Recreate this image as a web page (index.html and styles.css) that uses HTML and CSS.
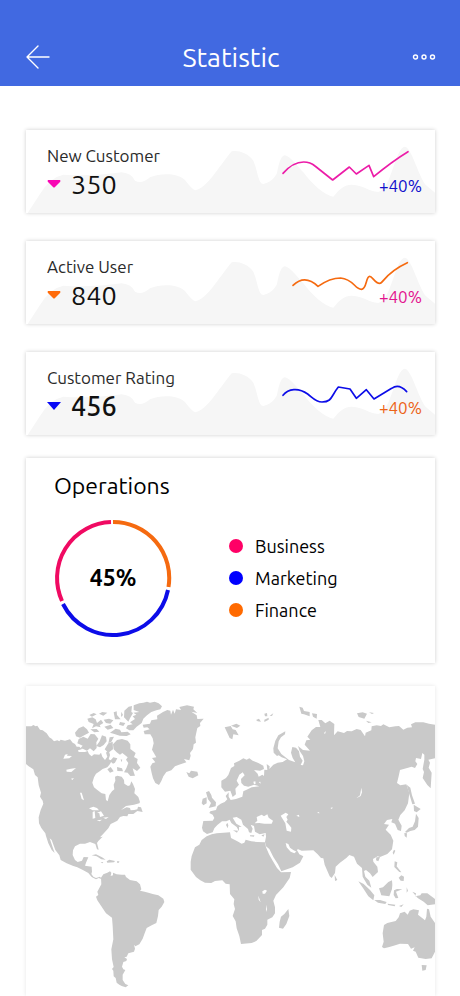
FILE: index.html
```html
<!DOCTYPE html>
<html lang="en">
<head>
<meta charset="utf-8">
<meta name="viewport" content="width=device-width, initial-scale=1">
<title>Statistic</title>
<link rel="stylesheet" href="styles.css">
</head>
<body>
<svg class="defs" aria-hidden="true">
  <symbol id="hills" viewBox="33 28 1227 249" preserveAspectRatio="none">
    <path d="M38 277L75 220Q105 170 145 162C190 166 260 164 320 155Q350 158 360 180Q380 192 405 170C440 155 490 158 510 178Q530 205 540 209C575 205 610 140 650 92C670 88 700 98 715 120C728 150 730 190 745 190C765 185 775 175 785 160C790 140 795 104 810 104C830 110 850 140 865 155C890 190 930 225 955 228C970 210 985 192 1010 192C1050 195 1060 212 1090 214C1130 205 1140 80 1170 78C1190 80 1215 180 1235 195L1260 216V277Z"/>
  </symbol>
</svg>
<header class="topbar">
  <button class="icon-btn" type="button" aria-label="Back">
    <svg width="24" height="24" viewBox="0 0 24 24"><path d="M23 12H1M12 1L1 12L12 23"/></svg>
  </button>
  <h1>Statistic</h1>
  <button class="icon-btn" type="button" aria-label="More">
    <svg width="24" height="24" viewBox="0 0 24 24"><circle cx="3.500" cy="12" r="2"/><circle cx="12" cy="12" r="2"/><circle cx="20.500" cy="12" r="2"/></svg>
  </button>
</header>
<main>
  <div class="stats">
    <section class="card stat">
      <svg class="hills"><use href="#hills"/></svg>
      <div>
        <h2>New Customer</h2>
        <p class="value"><svg class="pink" width="14" height="8" viewBox="0 0 14 8"><path d="M1 0H13Q14 1 13 2L8 7Q7 8 6 7L1 2Q0 1 1 0Z"/></svg>350</p>
      </div>
      <div class="trend">
        <svg class="pink-line" viewBox="165 66 426 108"><path d="M174 160Q204 126 236 126Q256 126 270 138L323 180L373 141L394 162L432 136L446 170Q500 125 549 95"/></svg>
        <span class="blue-text">+40%</span>
      </div>
    </section>
    <section class="card stat">
      <svg class="hills"><use href="#hills"/></svg>
      <div>
        <h2>Active User</h2>
        <p class="value"><svg class="orange" width="14" height="8" viewBox="0 0 14 8"><path d="M1 0H13Q14 1 13 2L8 7Q7 8 6 7L1 2Q0 1 1 0Z"/></svg>840</p>
      </div>
      <div class="trend">
        <svg class="orange-line" viewBox="165 69 426 108"><path d="M204 166Q240 132 279 169Q315 144 347 144C385 147 390 178 409 178C426 178 422 139 434 139C442 139 450 160 464 160C476 160 478 130 547 98"/></svg>
        <span class="pink-text">+40%</span>
      </div>
    </section>
    <section class="card stat">
      <svg class="hills"><use href="#hills"/></svg>
      <div>
        <h2>Customer Rating</h2>
        <p class="value strong"><svg class="blue" width="14" height="8" viewBox="0 0 14 8"><path d="M0 0H14L7 8Z"/></svg>456</p>
      </div>
      <div class="trend">
        <svg class="blue-line" viewBox="165 72 426 108"><path d="M174 166C190 146 220 142 248 162C264 174 272 186 291 186C322 186 318 168 340 141L375 147L394 175L424 149L447 177L500 145Q522 130 545 155"/></svg>
        <span class="orange-text">+40%</span>
      </div>
    </section>
  </div>

  <section class="card operations">
    <h2>Operations</h2>
    <div class="ops-body">
      <div class="donut">
        <svg viewBox="0 0 118 118" aria-hidden="true">
          <path class="orange-line" d="M59 3A56 56 0 0 1 114.500 68"/>
          <path class="blue-line" d="M114 71A56 56 0 0 1 9 85"/>
          <path class="rose-line" d="M8 82A56 56 0 0 1 57 3"/>
        </svg>
        <strong>45%</strong>
      </div>
      <ul class="legend">
        <li><i class="dot rose-dot"></i>Business</li>
        <li><i class="dot blue-dot"></i>Marketing</li>
        <li><i class="dot orange-dot"></i>Finance</li>
      </ul>
    </div>
  </section>

  <section class="card map">
    <svg viewBox="18 18 1227 930" role="img" aria-label="World map">
      <g>
        <!-- North America -->
        <path d="M18 139L34 139L40 135L47 139L52 137L60 149L68 151L80 160L88 172L95 176L102 184L112 181L118 184L122 179L135 182L150 178L158 188L165 192L170 200L178 200L185 208L174 211L176 216L195 216L203 213L207 222L215 229L222 223L238 224L243 218L247 230L255 240L262 230L258 218L266 210L270 225L266 238L275 242L270 252L262 262L248 267L240 273L228 281L222 292L217 308L222 322L232 330L245 340L256 342L258 360L263 364L268 345L276 334L283 328L281 314L286 302L285 290L292 287L305 290L312 300L313 311L324 318L330 316L334 304L339 312L345 327L343 340L355 351L360 366L358 370L342 374L318 378L303 390L320 382L330 384L332 391L343 390L352 388L354 380L363 382L368 396L352 393L340 402L325 402L322 409L310 408L300 411L292 422L280 428L272 432L265 445L250 461L240 472L248 470L235 483L231 489L236 509L231 508L226 492L210 486L195 491L180 491L165 499L159 511L158 525L165 540L173 546L186 542L191 531L205 532L198 548L195 557L215 560L216 575L214 582L220 590L228 594L240 590L246 598L236 594L228 598L215 591L205 579L190 571L172 562L160 558L140 550L122 540L118 526L106 510L95 480L89 475L97 499L104 519L95 510L85 490L78 468L76 460L64 444L57 430L56 412L62 390L70 371L68 362L60 350L63 338L56 315L53 292L45 285L40 268L25 258L18 252Z"/>
        <!-- Arctic islands -->
        <path d="M165 158L176 145L190 139L201 148L207 158L190 167L180 173L168 169ZM176 177L190 170L203 176L212 162L224 163L235 176L229 187L230 204L221 214L210 205L201 212L188 206L179 207L188 197L172 190ZM202 116L217 112L227 118L231 129L243 119L250 129L239 136L242 142L228 139L216 145L221 132L206 126ZM208 105L221 99L230 103L216 110ZM237 101L247 96L262 98L250 107ZM281 97L290 94L291 105L302 118L285 118ZM251 119L267 116L280 121L271 131L258 129ZM304 95L309 105L303 111ZM313 92L326 80L336 78L334 96L339 99L330 115L325 125L312 112ZM341 76L358 70L370 68L381 65L390 68L404 65L416 70L426 79L421 88L409 91L394 96L381 106L370 116L365 129L350 140L340 151L328 151L318 145L323 136L338 133L330 127L345 117L338 109L349 104L340 98L358 96L341 90ZM300 126L316 129L310 138L297 134ZM253 140L272 134L280 144L263 149ZM270 158L287 146L300 149L304 157L323 155L332 163L320 168L299 167L283 162ZM246 166L258 170L260 184L251 195L240 202L229 198L239 184ZM269 172L282 170L274 185L265 190ZM211 148L230 147L238 155L223 157Z"/>
        <path d="M291 180L306 177L323 182L331 193L331 207L347 219L342 231L353 237L351 249L361 263L351 273L338 265L341 276L345 287L331 288L323 278L312 277L319 265L325 249L318 239L323 232L307 219L300 224L290 217L281 208L279 193ZM270 243L280 232L292 235L285 248L279 251ZM262 268L272 261L281 274L270 278ZM265 190L278 185L279 208L265 218L254 208ZM291 261L306 265L309 274L292 273ZM302 238L307 239L304 247Z"/>
        <!-- Greenland -->
        <path d="M368 134L390 131L394 121L412 118L411 107L429 96L442 90L451 92L453 104L459 89L464 101L468 88L483 90L478 81L501 76L522 80L520 88L532 99L514 95L530 106L532 117L551 116L540 129L541 138L532 144L526 172L528 188L521 193L519 207L510 219L512 227L508 241L492 237L499 247L477 254L465 259L454 271L439 276L430 289L424 303L417 315L406 309L399 295L395 279L391 260L397 250L406 247L396 234L409 232L402 220L396 209L401 190L398 175L391 163L374 163L371 153L389 148L382 142L371 143Z"/>
        <path d="M499 276L508 280L513 272L532 275L535 286L518 295L506 290Z"/>
        <!-- Caribbean -->
        <path d="M215 526L228 523L246 532L257 539L244 538L230 529ZM260 544L268 539L285 543L282 547L262 548ZM242 546L250 546L247 550ZM291 544L298 544L297 548L291 548Z"/>
      </g>
      <!-- South America -->
      <path d="M243 593L250 583L262 578L270 574L274 578L272 588L279 586L279 578L290 583L305 584L315 584L318 591L330 600L350 604L360 613L364 628L360 632L374 635L388 639L398 642L415 646L430 656L433 666L425 680L416 690L414 708L409 729L395 736L380 744L374 760L368 776L358 793L346 799L342 794L345 806L342 815L325 820L320 830L313 832L321 837L319 843L310 846L306 860L310 868L316 870L308 884L308 900L316 912L325 916L317 922L305 918L298 914L290 908L287 894L281 889L280 872L276 867L281 861L276 838L274 808L280 778L278 738L276 713L258 700L245 680L232 661L228 650L235 645L232 635L244 613Z"/>
      <g transform="translate(480 0)">
        <!-- Eurasia -->
        <path d="M70 423L98 422L103 414L98 404L88 399L91 394L108 390L112 379L122 371L134 366L142 358L137 348L146 337L146 350L152 360L168 357L187 350L190 334L203 328L215 322L238 319L222 314L205 320L192 317L184 309L183 297L194 286L188 277L178 284L170 302L177 314L166 326L168 343L158 351L151 332L135 335L124 322L124 302L138 294L145 285L153 264L163 258L162 250L178 242L190 235L200 239L208 235L218 242L235 249L250 257L252 267L240 272L222 270L233 281L236 290L247 284L252 288L253 269L262 270L260 252L269 259L268 267L280 254L293 248L308 246L321 238L305 232L296 226L291 228L281 218L280 205L286 182L295 166L316 154L315 163L303 172L296 184L293 205L304 222L327 240L346 247L338 234L333 218L337 201L348 203L357 214L360 230L368 242L362 255L369 256L373 244L369 228L359 213L354 198L369 210L390 212L374 194L379 181L391 179L382 170L395 151L408 141L421 141L415 120L425 120L436 130L449 122L463 132L462 166L473 154L492 159L501 153L515 154L530 147L542 150L555 169L557 158L574 151L575 139L590 136L603 138L610 133L628 142L646 139L657 138L670 149L682 143L696 142L693 133L706 127L730 127L747 131L765 134L765 235L745 239L750 248L746 263L755 278L752 325L742 315L728 294L732 276L728 267L733 239L733 224L727 219L723 237L708 234L706 244L712 252L705 264L695 260L660 270L656 289L651 309L661 316L679 313L688 340L684 370L674 391L661 405L655 419L665 437L663 453L653 450L645 431L634 427L637 417L621 420L612 432L627 434L617 449L632 464L640 482L636 508L622 522L600 531L593 529L579 537L580 545L592 560L594 576L578 591L570 580L558 570L552 573L556 590L568 602L574 623L562 614L548 590L546 564L531 551L522 530L508 525L499 534L480 548L467 560L465 579L455 594L449 589L434 554L430 535L423 534L413 523L400 511L365 512L353 507L350 515L341 511L330 503L325 492L317 489L320 502L332 515L343 520L352 512L358 523L370 529L360 548L338 562L304 574L294 553L280 531L268 507L258 499L255 486L258 470L257 459L239 463L225 455L222 438L212 434L218 446L214 459L207 457L204 447L189 434L184 419L170 411L158 413L169 431L185 440L177 441L177 454L170 441L154 429L149 419L139 424L126 424L112 435L103 445L98 457L81 462L69 454L66 443Z"/>
        <path d="M80 469L95 463L110 460L150 457L153 474L172 484L185 491L193 488L197 479L214 484L232 486L255 487L258 502L267 523L278 542L291 564L303 577L333 576L329 594L310 622L288 645L280 662L285 682L285 700L277 712L262 719L262 734L255 746L246 750L246 765L229 783L215 789L183 792L178 768L170 745L167 724L158 708L165 687L161 672L163 658L150 642L149 613L137 611L127 601L105 603L94 609L75 608L61 601L48 591L32 569L32 545L35 528L45 502L58 494L65 480Z"/>
        <!-- Islands around Europe and Africa -->
        <path d="M78 337L87 333L94 345L96 353L108 367L107 379L86 384L93 369L84 358ZM65 370L68 356L80 352L80 370L70 376ZM142 428L145 436L143 445L138 435ZM159 451L174 452L171 458ZM210 466L223 466L222 470L210 469ZM244 466L254 463L250 470ZM325 687L328 708L319 732L309 746L297 743L299 725L303 710L313 702ZM464 585L472 600L465 603Z"/>
        <!-- Arctic Ocean islands -->
        <path d="M134 142L152 138L158 148L167 150L176 166L160 163L157 178L149 174L141 157ZM153 137L169 131L181 137L171 144ZM228 120L237 116L243 125L233 124ZM253 101L261 99L262 109L255 109ZM253 119L266 113L266 119L253 126ZM269 107L280 100L276 108ZM358 80L368 83L372 93L389 96L389 109L372 103L364 101ZM396 100L411 102L410 116L399 110ZM531 100L548 97L561 101L553 116L536 111ZM567 97L582 99L576 102ZM558 122L575 127L565 129Z"/>
        <!-- Japan and South-East Asia -->
        <path d="M680 314L691 323L696 346L705 371L697 373L688 343ZM701 374L722 387L710 397L702 393ZM708 401L716 414L714 440L704 450L691 453L680 458L675 456L687 444L698 440L705 424ZM673 459L681 460L680 473L674 468ZM642 509L646 512L641 524L638 518ZM589 532L600 531L595 544L588 541ZM644 544L652 547L650 559L664 577L658 576L643 561ZM664 586L672 590L671 603L662 602L656 593ZM535 604L551 612L570 630L583 646L580 661L565 649L549 624ZM583 660L600 660L620 666L616 672L594 668ZM597 625L609 622L625 606L636 601L637 614L636 627L628 649L604 646ZM642 631L651 627L667 628L648 635L655 654L647 655L641 645ZM680 622L684 632L680 638ZM697 635L708 640L706 649L721 646L725 640L742 640L765 657L765 673L743 676L731 665L713 654ZM623 671L646 674L644 679L624 675ZM657 678L671 673L664 681Z"/>
        <!-- Australia and Tasmania -->
        <path d="M612 735L622 729L647 723L656 712L660 700L674 695L683 704L689 692L700 688L717 691L714 704L735 721L739 710L741 686L747 688L752 710L765 729L765 815L755 835L737 837L715 833L707 815L699 812L704 802L693 806L684 792L660 791L641 797L628 801L612 805L606 801L611 785L608 760ZM725 855L740 856L737 870L727 872Z"/>
      </g>
      <!-- Lakes and inland seas -->
      <g class="water">
        <path d="M135 224L143 222L141 227L156 228L148 235L130 236ZM139 269L153 266L168 264L154 276L140 275ZM153 296L162 294L157 300ZM180 338L185 338L192 361L185 357ZM207 385L220 380L231 384L237 391L218 391ZM218 396L224 393L226 414L218 416ZM231 398L243 394L252 407L240 411L238 400ZM230 421L246 419L239 424ZM249 413L266 411L258 417Z"/>
        <path d="M704 430L712 422L710 411L725 404L732 409L742 403L746 413L759 422L755 431L733 431L718 429ZM782 407L797 398L805 403L799 411L803 419L799 425L807 434L814 443L813 455L800 452L796 430ZM829 407L837 404L838 411ZM1009 355L1020 346L1024 323L1026 337L1022 348ZM931 384L938 382L936 387ZM891 399L896 396L899 400ZM912 159L918 153L915 162ZM727 634L735 629L741 632L735 641L728 641ZM715 647L719 658L722 667L716 659ZM738 674L741 688L738 696ZM700 305L706 304L707 311L702 313ZM716 306L721 305L722 311Z"/>
      </g>
    </svg>
  </section>
</main>
</body>
</html>
```
FILE: styles.css
```css
* { box-sizing: border-box; }

body {
  margin: 0;
  background: #fff;
  color: #111;
  font-family: Ubuntu, "Noto Sans", "Open Sans", sans-serif;
  font-size: 17px;
}

h1, h2, p, ul { margin: 0; padding: 0; font-weight: 400; }

svg { display: block; }

.defs { position: absolute; width: 0; height: 0; }

.topbar {
  display: flex;
  align-items: center;
  justify-content: space-between;
  padding: 28px 22px 0 24px;
  height: 86px;
  background: #4169e1;
  color: #fff;
}

.topbar h1 { font-size: 27px; line-height: 36px; }

.icon-btn {
  padding: 2px;
  border: 0;
  background: none;
  color: inherit;
  cursor: pointer;
}

.icon-btn svg {
  fill: none;
  stroke: #fff;
  stroke-width: 1.4;
  stroke-linecap: round;
  stroke-linejoin: round;
}

main {
  display: flex;
  flex-direction: column;
  gap: 23px;
  padding: 44px 25px 0 26px;
}

.stats { display: grid; gap: 28px; }

.card {
  background: #fff;
  box-shadow: 0 0 4px rgba(0, 0, 0, 0.2);
}

.stat {
  position: relative;
  display: flex;
  justify-content: space-between;
  padding: 16px 13px 13px 21px;
}

.stat > div { position: relative; }

.hills {
  position: absolute;
  inset: 0;
  width: 100%;
  height: 100%;
  fill: #f6f6f6;
}

.stat h2 { font-size: 17px; line-height: 20px; color: #2a2a2a; }

.value {
  display: flex;
  align-items: center;
  gap: 10px;
  padding-top: 2px;
  font-size: 27px;
  line-height: 32px;
}

.strong { font-weight: 500; }

.trend {
  width: 142px;
  margin-top: -4px;
  text-align: right;
  line-height: 16px;
}

.trend svg { width: 100%; height: 36px; overflow: visible; }

.trend span { display: block; }

.trend path {
  fill: none;
  stroke-width: 5;
  stroke-linecap: round;
  stroke-linejoin: round;
}

.pink { fill: #f807b4; }
.orange { fill: #ff6b0a; }
.blue { fill: #0808f5; }

.pink-line { stroke: #ec1ca8; }
.orange-line { stroke: #f56a10; }
.blue-line { stroke: #0c0ce8; }
.rose-line { stroke: #f00a62; }

.pink-text { color: #e3148f; }
.orange-text { color: #ec6418; }
.blue-text { color: #1010cc; }

.operations { padding: 14px 28px 26px; }

.operations h2 { font-size: 23px; line-height: 28px; color: #000; }

.ops-body { display: flex; align-items: center; gap: 57px; padding-top: 19px; }

.donut { display: grid; place-items: center; width: 118px; }

.donut svg, .donut strong { grid-area: 1 / 1; }

.donut svg { width: 100%; }

.donut path { fill: none; stroke-width: 4; }

.donut strong { font-size: 23px; line-height: 28px; color: #000; }

.legend { list-style: none; font-size: 18px; line-height: 32px; color: #000; }

.legend li { display: flex; align-items: center; gap: 12px; }

.dot { width: 14px; height: 14px; border-radius: 50%; }

.rose-dot { background: #ff0066; }
.blue-dot { background: #0000ff; }
.orange-dot { background: #ff6a00; }

.map { box-shadow: 0 0 4px rgba(0, 0, 0, 0.1); }

.map svg { width: 100%; fill: #c9c9c9; }

.water { fill: #fff; }
```
